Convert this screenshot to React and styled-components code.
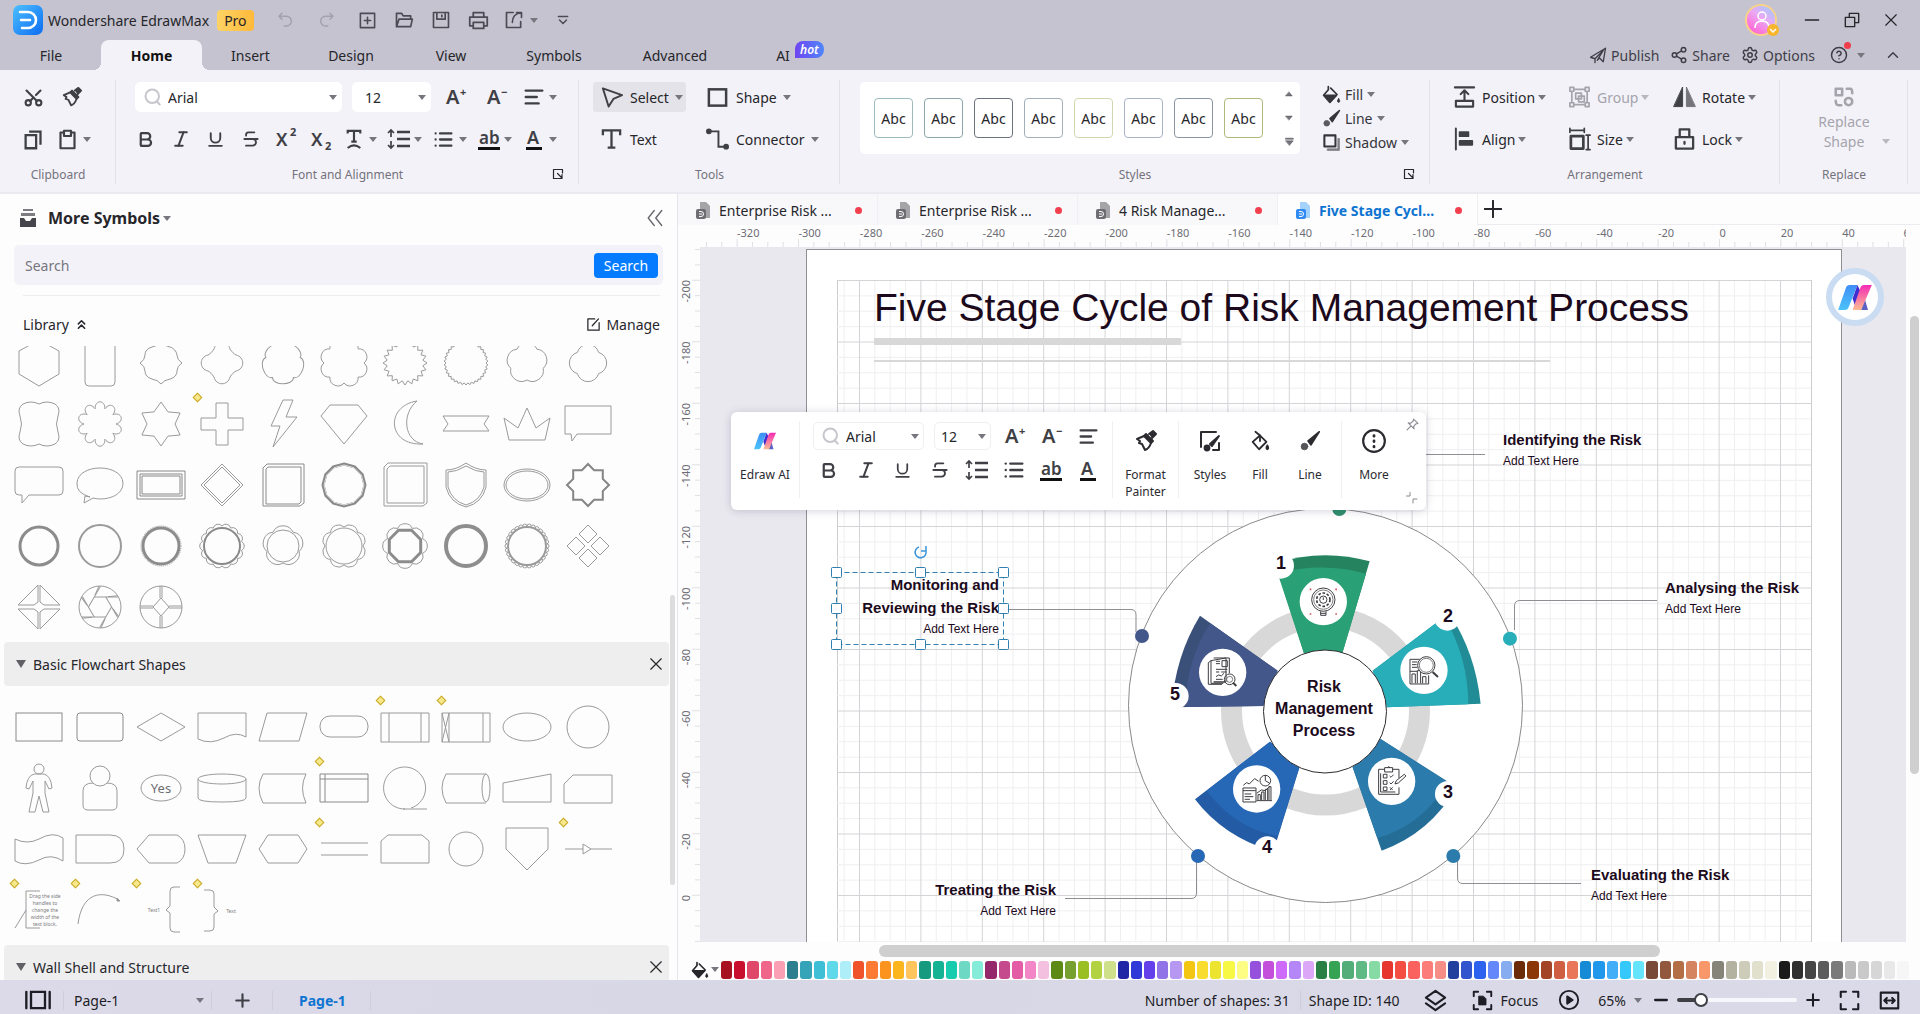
import React, { useState } from "react";
import styled, { createGlobalStyle, css } from "styled-components";
import {
  AlignLeft,
  Bold,
  ChevronsUp,
  ChevronUp,
  CircleHelp,
  Italic,
  List,
  Scissors,
  Settings,
  Share2,
  Strikethrough,
  Underline,
} from "lucide-react";

// STYLES
const GlobalStyle = createGlobalStyle`
  * {
    box-sizing: border-box;
  }
  body {
    margin: 0;
    overflow: hidden;
    font-family: "Noto Sans", "Open Sans", sans-serif;
    font-size: 14px;
    color: #26262b;
  }
  button, input, select {
    font: inherit;
    color: inherit;
  }
  button {
    border: 0;
    padding: 0;
    background: none;
    cursor: pointer;
  }
  svg {
    display: block;
    flex: none;
  }
`;

const Window = styled.div`
  display: flex;
  flex-direction: column;
  height: 100vh;
  background: #fdfdfe;
`;

const TitleBar = styled.header`
  display: flex;
  align-items: center;
  flex: none;
  height: 40px;
  padding: 0 20px 0 13px;
  background: #c5c3cf;
  .app-name {
    margin: 0 8px 0 5px;
  }
`;

const ProBadge = styled.span`
  padding: 0 7px;
  border-radius: 4px;
  line-height: 21px;
  background: linear-gradient(90deg, #ffd365, #ffb93a);
`;

const QuickBar = styled.div`
  display: flex;
  align-items: center;
  flex: 1;
  margin-left: 11px;
`;

const QuickButton = styled.button`
  display: flex;
  align-items: center;
  justify-content: center;
  gap: 6px;
  width: ${({ $w }) => $w || 37}px;
  height: 30px;
  color: ${({ $off }) => ($off ? "#a3a1ac" : "#4c4b55")};
`;

const WindowButtons = styled.div`
  display: flex;
  align-items: center;
  gap: 24px;
  button {
    width: 16px;
  }
`;

const TabBar = styled.nav`
  display: flex;
  flex: none;
  height: 30px;
  padding-left: 1px;
  background: #c5c3cf;
`;

const MenuTab = styled.button`
  position: relative;
  width: ${({ $w }) => $w}px;
  height: 30px;
  ${({ $active }) =>
    $active &&
    css`
      font-weight: 700;
      color: #111;
      border-radius: 8px 8px 0 0;
      background: #f3f2f8;
      &::before,
      &::after {
        content: "";
        position: absolute;
        bottom: 0;
        left: -8px;
        width: 8px;
        height: 8px;
        background: radial-gradient(circle at 0 0, #c5c3cf 8px, #f3f2f8 8px);
      }
      &::after {
        left: auto;
        right: -8px;
        background: radial-gradient(circle at 100% 0, #c5c3cf 8px, #f3f2f8 8px);
      }
    `}
`;

const HotBadge = styled.span`
  position: absolute;
  left: 54px;
  top: 1px;
  padding: 0 5px;
  border-radius: 8px 8px 8px 0;
  font-size: 12px;
  font-style: italic;
  font-weight: 600;
  line-height: 17px;
  color: #fff;
  background: linear-gradient(90deg, #6f45f2, #4f86fb);
`;

const TabActions = styled.div`
  display: flex;
  align-items: center;
  gap: 11px;
  margin-left: auto;
  padding-right: 18px;
  color: #3f3e48;
  button {
    position: relative;
    display: flex;
    align-items: center;
    gap: 4px;
  }
  .help {
    gap: 9px;
    margin: 0 8px 0 4px;
  }
`;

const HelpDot = styled.i`
  position: absolute;
  right: 14px;
  top: -4px;
  width: 7px;
  height: 7px;
  border-radius: 50%;
  background: #f03e4d;
`;

const Caret = styled.i`
  flex: none;
  width: 0;
  height: 0;
  border: 4px solid transparent;
  border-width: 5px 4px 0;
  border-top-color: ${({ $color }) => $color || "#77767f"};
`;

const Ribbon = styled.section`
  display: flex;
  flex: none;
  height: 124px;
  padding-right: 12px;
  border-bottom: 2px solid #ebeaf0;
  background: #f3f2f8;
`;

const Group = styled.div`
  position: relative;
  display: flex;
  flex-direction: column;
  flex: ${({ $grow }) => ($grow ? 1 : "none")};
  gap: 12px;
  width: ${({ $w }) => $w}px;
  padding: 12px 0 0 ${({ $pad }) => $pad || 14}px;
  &::after {
    content: "";
    position: absolute;
    right: 0;
    top: 10px;
    height: 104px;
    border-right: 1px solid #e2e1e8;
  }
`;

const GroupLabel = styled.div`
  position: absolute;
  left: 0;
  right: 0;
  bottom: 8px;
  font-size: 12px;
  line-height: 18px;
  text-align: center;
  color: #74737d;
`;

const Launcher = styled.button`
  position: absolute;
  right: 15px;
  bottom: 12px;
`;

const Row = styled.div`
  display: flex;
  align-items: center;
  height: 30px;
  padding-left: ${({ $pad }) => $pad || 0}px;
`;

const IconButton = styled.button`
  display: flex;
  align-items: center;
  flex: none;
  width: ${({ $w }) => $w || 35}px;
  height: 30px;
  color: #3f3f46;
  span {
    display: flex;
    justify-content: center;
    width: ${({ $drop }) => ($drop ? "31px" : "100%")};
  }
`;

const SelectBox = styled.label`
  display: flex;
  align-items: center;
  flex: none;
  gap: 6px;
  width: ${({ $w }) => $w}px;
  height: ${({ $h }) => $h || 30}px;
  padding: 0 4px 0 ${({ $pad }) => $pad || 8}px;
  border: 1px solid ${({ $line }) => ($line ? "#efeff2" : "#fff")};
  border-radius: 5px;
  background: #fff;
  select {
    flex: 1;
    min-width: 0;
    border: 0;
    padding: 0;
    outline: 0;
    appearance: none;
    background: none;
  }
`;

const ToolGrid = styled.div`
  display: grid;
  grid-template-columns: ${({ $cols }) => $cols};
  grid-auto-rows: 30px;
  row-gap: 12px;
`;

const ToolButton = styled.button`
  display: flex;
  align-items: center;
  justify-self: start;
  gap: ${({ $tight }) => ($tight ? 3 : 6)}px;
  height: 30px;
  padding: 0 3px 0 7px;
  border-radius: 3px;
  color: ${({ $off }) => ($off ? "#a5a4ad" : "#26262b")};
  background: ${({ $active }) => ($active ? "#e4e3e9" : "none")};
  .ico {
    width: 23px;
    margin-right: ${({ $tight }) => ($tight ? 3 : 1)}px;
    color: ${({ $off }) => ($off ? "#a5a4ad" : "#3f3f46")};
  }
`;

const StylesBody = styled.div`
  display: flex;
  gap: 22px;
  padding-right: 22px;
`;

const Gallery = styled.div`
  display: flex;
  align-items: center;
  flex: 1;
  gap: 11px;
  height: 72px;
  padding: 0 6px 0 14px;
  border-radius: 5px;
  background: #fff;
`;

const StyleCard = styled.button`
  width: 39px;
  height: 40px;
  border: 1px solid ${({ $line }) => $line};
  border-radius: 4px;
  background: #fff;
`;

const GalleryArrows = styled.div`
  display: flex;
  flex-direction: column;
  justify-content: space-between;
  height: 56px;
  margin-left: auto;
`;

const SideList = styled.div`
  display: flex;
  flex-direction: column;
  width: 86px;
  button {
    display: flex;
    align-items: center;
    gap: 4px;
    height: 24px;
    color: #35353b;
  }
`;

const ReplaceButton = styled.button`
  display: flex;
  flex-direction: column;
  align-items: center;
  gap: 4px;
  position: relative;
  padding: 4px 14px 0 0;
  line-height: 20px;
  color: #a5a4ad;
  i {
    position: absolute;
    right: 18px;
    bottom: 8px;
  }
`;

const Main = styled.main`
  display: flex;
  flex: 1;
  min-height: 0;
`;

const Sidebar = styled.aside`
  display: flex;
  flex-direction: column;
  flex: none;
  width: 678px;
  border-right: 1px solid #e6e5ec;
  background: #fdfdfe;
`;

const SidebarHead = styled.div`
  display: flex;
  align-items: center;
  flex: none;
  height: 48px;
  padding: 0 13px 0 19px;
  h2 {
    margin: 0 3px 0 11px;
    font-size: 16px;
    font-weight: 700;
  }
  button {
    margin-left: auto;
    color: #66666c;
  }
`;

const SearchBox = styled.form`
  display: flex;
  align-items: center;
  flex: none;
  height: 40px;
  margin: 3px 14px 10px;
  padding: 0 5px 0 11px;
  border-radius: 5px;
  background: #f3f2f8;
  input {
    flex: 1;
    border: 0;
    padding: 0;
    outline: 0;
    background: none;
  }
  input::placeholder {
    color: #77767f;
    opacity: 1;
  }
  button {
    width: 64px;
    height: 25px;
    border-radius: 4px;
    color: #fff;
    background: #057bff;
  }
`;

const LibraryBar = styled.div`
  display: flex;
  justify-content: space-between;
  flex: none;
  height: 51px;
  margin: 0 17px 0 23px;
  padding-top: 6px;
  border-top: 1px solid #ededf2;
  button {
    display: flex;
    align-items: center;
    gap: 5px;
  }
`;

const ShapeScroll = styled.div`
  position: relative;
  flex: 1;
  min-height: 0;
  overflow: hidden;
`;

const ScrollThumb = styled.div`
  position: absolute;
  right: 2px;
  top: 249px;
  width: 5px;
  height: 290px;
  border-radius: 3px;
  background: #dddde0;
`;

const ShapeGrid = styled.div`
  display: grid;
  grid-template-columns: repeat(10, 61px);
  grid-auto-rows: 61px;
  margin: ${({ $scrolled }) => ($scrolled ? "-14px 0 5px 8px" : "10px 0 5px 8px")};
`;

const ShapeCell = styled.button`
  position: relative;
  display: flex;
  align-items: center;
  justify-content: center;
  ${({ $marked }) =>
    $marked &&
    css`
      &::before {
        content: "";
        position: absolute;
        left: 3px;
        top: 1px;
        width: 5px;
        height: 5px;
        border: 1px solid #c9a62c;
        background: #f6e98a;
        transform: rotate(45deg);
      }
    `}
`;

const Category = styled.div`
  display: flex;
  align-items: center;
  height: 44px;
  margin: 0 8px 0 4px;
  padding: 0 6px 0 12px;
  border-radius: 4px;
  background: #eeeeef;
  span {
    flex: 1;
    margin-left: 7px;
  }
  i {
    border-width: 8px 5px 0;
    border-top-color: #606066;
  }
`;

const Workspace = styled.section`
  display: flex;
  flex-direction: column;
  flex: 1;
  min-width: 0;
`;

const DocTabs = styled.div`
  display: flex;
  align-items: center;
  flex: none;
  height: 31px;
  border-bottom: 1px solid #ececf0;
`;

const DocTab = styled.button`
  display: flex;
  align-items: center;
  gap: 8px;
  width: 200px;
  height: 31px;
  padding: 2px 15px 0 18px;
  border-right: 1px solid #f0f0f4;
  background: ${({ $active }) => ($active ? "#fdfdfe" : "#f8f8fb")};
  ${({ $active }) => $active && "color: #0d74d1; font-weight: 700;"}
  span {
    flex: 1;
    overflow: hidden;
    text-align: left;
    white-space: nowrap;
  }
  i {
    width: 7px;
    height: 7px;
    border-radius: 50%;
    background: #f2404f;
  }
`;

const NewTab = styled.button`
  margin-left: 6px;
`;

const Board = styled.div`
  display: grid;
  grid-template-columns: 22px 1fr 14px;
  grid-template-rows: 22px 1fr;
  flex: 1;
  min-height: 0;
`;

const RulerBox = styled.div`
  overflow: hidden;
  min-width: 0;
  min-height: 0;
  text {
    font-size: 11px;
    fill: #6d6d75;
  }
`;

const Canvas = styled.div`
  position: relative;
  overflow: hidden;
  min-width: 0;
  min-height: 0;
  background: #e9e8ef;
  font-family: "Liberation Sans", Arial, sans-serif;
  color: #1c0a1c;
`;

const VScroll = styled.div`
  padding: 69px 1px 0 4px;
  &::before {
    content: "";
    display: block;
    height: 458px;
    border-radius: 5px;
    background: #cfcfcf;
  }
`;

const HScroll = styled.div`
  flex: none;
  height: 17px;
  padding: 3px 260px 0 201px;
  &::before {
    content: "";
    display: block;
    height: 12px;
    border-radius: 6px;
    background: #cfcfcf;
  }
`;

const PageTitle = styled.h1`
  position: absolute;
  left: 174px;
  top: 38px;
  margin: 0;
  font-size: 39px;
  font-weight: 400;
  line-height: 46px;
  white-space: nowrap;
`;

const Note = styled.div`
  position: absolute;
  left: ${({ $x }) => $x}px;
  top: ${({ $y }) => $y}px;
  width: 167px;
  text-align: ${({ $right }) => ($right ? "right" : "left")};
  font-size: 12px;
  line-height: 20px;
  b {
    display: block;
    font-size: 15px;
    line-height: 23px;
    white-space: nowrap;
  }
`;

const HubText = styled.div`
  position: absolute;
  left: 564px;
  top: 429px;
  width: 120px;
  font-size: 16px;
  font-weight: 700;
  line-height: 22px;
  text-align: center;
`;

const StageNumber = styled.b`
  position: absolute;
  left: ${({ $x }) => $x - 10}px;
  top: ${({ $y }) => $y - 10}px;
  width: 20px;
  font-size: 18px;
  line-height: 20px;
  text-align: center;
`;

const SelectionSvg = styled.svg`
  position: absolute;
  left: 0;
  top: 0;
`;

const FloatBar = styled.div`
  position: absolute;
  left: 31px;
  top: 165px;
  display: flex;
  align-items: stretch;
  width: 695px;
  height: 98px;
  padding: 9px 0 12px;
  border-radius: 6px;
  background: #fff;
  box-shadow: 0 1px 8px rgba(60, 60, 90, 0.22);
  font-family: "Noto Sans", "Open Sans", sans-serif;
  color: #26262b;
`;

const FloatButtons = styled.div`
  display: flex;
  justify-content: center;
  flex: none;
  gap: 6px;
  width: ${({ $w }) => $w}px;
  border-right: ${({ $last }) => ($last ? 0 : "1px solid #f0f0f3")};
  button {
    display: flex;
    flex-direction: column;
    align-items: center;
    gap: 12px;
    min-width: 44px;
    padding-top: 7px;
    font-size: 12px;
    line-height: 17px;
    color: #2b2b30;
  }
  svg {
    height: 26px;
  }
`;

const FloatFont = styled.div`
  display: flex;
  flex-direction: column;
  flex: none;
  gap: 4px;
  width: 313px;
  border-right: 1px solid #f0f0f3;
`;

const FloatCorner = styled.div`
  display: flex;
  flex-direction: column;
  justify-content: space-between;
  margin: -3px 0 -6px auto;
  padding-right: 7px;
`;

const AiBubble = styled.button`
  position: absolute;
  left: 1126px;
  top: 21px;
  display: flex;
  align-items: center;
  justify-content: center;
  width: 58px;
  height: 58px;
  border: 6px solid #c9dcf1;
  border-radius: 50%;
  background: #fff;
`;

const ColorBar = styled.div`
  display: flex;
  align-items: center;
  flex: none;
  gap: 2px;
  height: 21px;
  padding: 0 11px 0 13px;
  .fill {
    display: flex;
    align-items: center;
    gap: 2px;
    width: 28px;
  }
`;

const Swatch = styled.button`
  flex: 1;
  height: 18px;
  border-radius: 3px;
  background: ${({ $c }) => $c};
`;

const StatusBar = styled.footer`
  display: flex;
  align-items: center;
  flex: none;
  height: 34px;
  padding: 6px 20px 0 24px;
  background: linear-gradient(90deg, #dcdae8, #d8d7e6 40%, #dbdae8);
  color: #1d1d26;
`;

const PageSelect = styled.label`
  display: flex;
  align-items: center;
  width: 149px;
  margin-left: 11px;
  padding: 0 7px 0 10px;
  border-left: 1px solid #cfcddb;
  border-right: 1px solid #cfcddb;
  select {
    flex: 1;
    border: 0;
    padding: 0;
    appearance: none;
    background: none;
  }
`;

const PageTab = styled.button`
  padding: 0 24px 0 26px;
  border-left: 1px solid #cfcddb;
  border-right: 1px solid #cfcddb;
  font-weight: 700;
  color: #0d74d1;
`;

const StatusRight = styled.div`
  display: flex;
  align-items: center;
  margin-left: auto;
  .count {
    padding-right: 10px;
    border-right: 1px solid #cfcddb;
  }
  .shape-id {
    padding: 0 24px 0 8px;
  }
`;

const StatusButton = styled.button`
  display: flex;
  align-items: center;
  gap: 8px;
  margin-right: ${({ $after }) => $after || 0}px;
`;

const Zoom = styled.input`
  appearance: none;
  width: 120px;
  height: 4px;
  margin: 0 9px;
  border-radius: 2px;
  background: linear-gradient(90deg, #3f3f46 18%, #f6f6fb 18%);
  &::-webkit-slider-thumb {
    appearance: none;
    width: 14px;
    height: 14px;
    border: 2px solid #3f3f46;
    border-radius: 50%;
    background: #fff;
  }
`;

// ICONS
const Svg = ({ s = 20, w = 2, fill = "none", children, ...rest }) => (
  <svg
    width={s}
    height={s}
    viewBox="0 0 24 24"
    fill={fill}
    stroke="currentColor"
    strokeWidth={w}
    strokeLinecap="round"
    strokeLinejoin="round"
    {...rest}
  >
    {children}
  </svg>
);

const Letters = ({ text, size = 20, mark, markY = 12, bar, w = 24 }) => (
  <svg width={w} height="30" viewBox={`0 0 ${w} 30`} fill="#3f3f46">
    <text x={bar ? 1 : 2} y={bar ? 20 : 22} fontSize={size} fontWeight="600">
      {text}
    </text>
    {mark && (
      <text x={w - 8} y={markY} fontSize="11" fontWeight="700">
        {mark}
      </text>
    )}
    {bar && <path d={`M0 24.5H${w}`} stroke="#111" strokeWidth="3" />}
  </svg>
);

const FontUp = () => <Letters text="A" mark="+" markY={14} />;
const FontDown = () => <Letters text="A" mark="−" markY={14} />;
const Highlight = () => <Letters text="ab" size={17} bar w={22} />;
const FontColor = () => <Letters text="A" size={18} bar w={16} />;

const BrushIcon = ({ s = 22 }) => (
  <Svg s={s} className="ico">
    <path d="M15 5 19 2l3 3-4 4" fill="currentColor" />
    <path d="M12 5l7 7-2 2-7-7z" fill="currentColor" />
    <path d="M10 7 3 10l3 2-1 2 3 1 3 6c4-1 5-4 6-7" />
  </Svg>
);

const CopyIcon = () => (
  <Svg s={21} w={2.6} strokeLinecap="butt">
    <path d="M3 7h12v15H3zM7 3h13v15" strokeLinejoin="miter" />
  </Svg>
);

const PasteIcon = () => (
  <Svg s={21} w={2.5}>
    <path d="M8 4H4v18h16V4h-4M8 2h8v6H8z" />
  </Svg>
);

const SpacingIcon = () => (
  <svg width="24" height="22" viewBox="0 0 24 22" fill="none" stroke="currentColor">
    <path d="M10 4h13M10 11h13M10 18h13" strokeWidth="2.6" />
    <path d="M4 2v7M1 5l3-3 3 3M4 13v7M1 17l3 3 3-3" strokeWidth="1.7" />
  </svg>
);

const TextCurveIcon = () => (
  <svg width="18" height="22" viewBox="0 0 20 24" fill="none" stroke="currentColor" strokeWidth="2.4">
    <path d="M3 6V3h14v3M10 3v12M7 15h6" />
    <path d="M3 22q7-6 14 0" />
  </svg>
);

const CursorIcon = () => (
  <Svg s={26} className="ico">
    <path d="M3 3 23 10l-9 4-5 8z" />
  </Svg>
);

const SquareIcon = () => (
  <Svg s={24} w={2.6} className="ico">
    <rect x="3" y="4" width="18" height="17" strokeLinejoin="miter" />
  </Svg>
);

const SerifTIcon = () => (
  <Svg s={24} w={2.4} className="ico" strokeLinecap="butt">
    <path d="M3 8V3h18v5M12 3v18M8 21h8" strokeLinejoin="miter" />
  </Svg>
);

const ConnectorIcon = () => (
  <Svg s={26} w={2} className="ico">
    <path d="M5 4h8v16h7" strokeLinejoin="miter" />
    <circle cx="3" cy="4" r="2" fill="currentColor" />
    <circle cx="21" cy="20" r="2" fill="currentColor" />
  </Svg>
);

const BucketIcon = ({ s = 19 }) => (
  <Svg s={s} w={2.2}>
    <path d="M8 2v4l-6 7 8 9 9-10-8-8" />
    <path d="M3 13h15l-8 8z" fill="currentColor" />
    <path d="M21 17q-3 4 0 5 3-1 0-5" fill="currentColor" strokeWidth="1" />
  </Svg>
);

const BucketOutline = () => (
  <Svg s={22} w={2}>
    <path d="M7 2l5 4-8 7 7 8 8-8-8-8" />
    <path d="M12 6v6M20 17q-2 3 0 4 2-1 0-4" fill="currentColor" />
  </Svg>
);

const PenIcon = ({ s = 19 }) => (
  <Svg s={s} w={1}>
    <path d="M22 2 10 12l3 4z" fill="currentColor" strokeWidth="2" />
    <circle cx="6" cy="18" r="3.6" fill="currentColor" opacity=".8" />
  </Svg>
);

const ShadowIcon = () => (
  <Svg s={19} w={2.6}>
    <path d="M7 22h15V7h-2v13H7z" fill="currentColor" opacity=".6" strokeWidth="1" />
    <rect x="3" y="3" width="14" height="14" />
  </Svg>
);

const PositionIcon = () => (
  <Svg s={24} w={2.2} className="ico">
    <path d="M2 2h20M12 16V6M8 9l4-4 4 4M3 16h18v6H3z" />
  </Svg>
);

const AlignIcon = () => (
  <Svg s={26} w={2} className="ico">
    <path d="M3 1v22" />
    <path d="M7 5h9v4H7zM7 14h13v4H7z" fill="currentColor" />
  </Svg>
);

const GroupIcon = () => (
  <Svg s={24} w={1.8} className="ico">
    <rect x="4" y="4" width="16" height="16" />
    <path d="M2 2h4v4H2zM18 2h4v4h-4zM2 18h4v4H2zM18 18h4v4h-4z" fill="#f3f2f8" />
    <path d="M8 8h6v6H8zM11 11h6v6h-6z" />
  </Svg>
);

const SizeIcon = () => (
  <Svg s={24} w={2} className="ico">
    <rect x="3" y="9" width="13" height="13" strokeWidth="2.8" />
    <path d="M2 3h15M2 1v4M17 1v4M21 8v15M19 8h4M19 23h4" strokeWidth="1.8" />
  </Svg>
);

const RotateIcon = () => (
  <Svg s={24} w={1} className="ico">
    <path d="M10 2v20H1z" fill="currentColor" />
    <path d="M14 2v20h9z" fill="currentColor" opacity=".7" />
  </Svg>
);

const LockIcon = () => (
  <Svg s={24} w={2.4} className="ico">
    <path d="M3 10h18v12H3zM7 10V2h10v8M12 15v2" />
  </Svg>
);

const ReplaceIcon = () => (
  <Svg s={22} w={2.8}>
    <path d="M3 3h7v7H3zM15 3h4q2 0 2 5M9 21H6q-3 0-3-5" />
    <circle cx="17" cy="17" r="4" />
  </Svg>
);

const LauncherIcon = () => (
  <Svg s={12} w={2.4}>
    <path d="M21 10V3H3v18h7M11 11l9 9M20 13v8h-8" />
  </Svg>
);

const AiLogo = ({ w = 34 }) => (
  <svg width={w} height={Math.round(w * 0.74)} viewBox="0 0 35 26">
    <defs>
      <linearGradient id="aiBlue" x1="0" y1="0" x2="0" y2="1">
        <stop offset="0" stopColor="#3e8ef7" />
        <stop offset="1" stopColor="#4cc3fa" />
      </linearGradient>
      <linearGradient id="aiPink" x1="0" y1="0" x2="0" y2="1">
        <stop offset="0" stopColor="#f52bb4" />
        <stop offset="1" stopColor="#fbbd93" />
      </linearGradient>
    </defs>
    <path d="M22 12h5l4 14h-8z" fill="#5b62c4" />
    <path d="M0 26 8 3q1-3 4-3h8l-9 23q-1 3-4 3z" fill="url(#aiBlue)" />
    <path d="M20 0l4 8-6 15-3-9z" fill="#3f2fd0" />
    <path d="M35 0h-8q-3 0-4 3l-8 23h9z" fill="url(#aiPink)" />
  </svg>
);

const AppLogo = () => (
  <svg width="30" height="30" viewBox="0 0 30 30">
    <defs>
      <linearGradient id="appBlue" x1="0" y1="0" x2="1" y2="1">
        <stop offset="0" stopColor="#4dc0ff" />
        <stop offset="1" stopColor="#0c6cf2" />
      </linearGradient>
    </defs>
    <rect width="30" height="30" rx="7" fill="url(#appBlue)" />
    <path d="M7 7h8a8 8 0 0 1 0 16H9M8 15h9" fill="none" stroke="#fff" strokeWidth="2.6" strokeLinecap="round" />
  </svg>
);

const DocIcon = ({ active }) => (
  <svg width="15" height="17" viewBox="0 0 15 17">
    <path d="M4 0h6l4 4v12H4z" fill={active ? "#a4d2fb" : "#a5a5a8"} />
    <rect y="7" width="10" height="10" rx="2" fill={active ? "#2f8af2" : "#6e6e72"} />
    <path d="M3 9.5h2a2.5 2.5 0 0 1 0 5H3M3 12h3" fill="none" stroke="#fff" />
  </svg>
);

const Avatar = () => (
  <svg width="36" height="36" viewBox="0 0 36 36">
    <defs>
      <linearGradient id="avatar" x1="1" y1="0" x2="0.3" y2="1">
        <stop offset="0" stopColor="#8fd3ff" />
        <stop offset="0.5" stopColor="#eaa9f5" />
        <stop offset="1" stopColor="#ff62d2" />
      </linearGradient>
    </defs>
    <circle cx="17" cy="18" r="15" fill="url(#avatar)" stroke="#f8d28a" strokeWidth="2" />
    <circle cx="18" cy="14" r="4" fill="none" stroke="#fff" strokeWidth="1.5" />
    <path d="M11 26q0-7 7-7t7 7" fill="none" stroke="#fff" strokeWidth="1.5" />
    <circle cx="29" cy="28" r="6" fill="#f8b62d" />
    <path d="m26 27 3 3 3-3" fill="none" stroke="#fff" strokeWidth="1.5" />
  </svg>
);

const Close = () => (
  <Svg s={14} w={2}>
    <path d="M3 3l18 18M21 3 3 21" />
  </Svg>
);

const FindIcon = () => (
  <Svg s={18} w={2.6} color="#c6c6cc">
    <circle cx="11" cy="11" r="9" />
    <path d="m17 18 4 4" />
  </Svg>
);

// SHAPE HELPERS
const polar = (r, a) => [24 + r * Math.sin(a), 24 - r * Math.cos(a)].map((v) => v.toFixed(1)).join(" ");

// closed outline that swings between two radii
const star = (n, outer, inner, turn = 0) => {
  const pts = [];
  for (let i = 0; i < n * 2; i++) pts.push(polar(i % 2 ? inner : outer, (Math.PI * i) / n + turn));
  return `M${pts.join("L")}Z`;
};

// closed outline made of n round lobes
const lobes = (n, r, bulge, turn = 0) => {
  let d = `M${polar(r, turn)}`;
  for (let i = 1; i <= n; i++) d += `A${bulge} ${bulge} 0 0 1 ${polar(r, (2 * Math.PI * i) / n + turn)}`;
  return `${d}Z`;
};

// like lobes, but with longer, softer leaves
const petals = (n, valley, reach) => {
  const step = (2 * Math.PI) / n;
  let d = `M${polar(valley, -step / 2)}`;
  for (let i = 0; i < n; i++) {
    const a = i * step;
    d += `C${polar(reach, a - step / 3)} ${polar(reach, a + step / 3)} ${polar(valley, a + step / 2)}`;
  }
  return `${d}Z`;
};

const polygon = (n, r, turn = 0) => {
  const pts = [];
  for (let i = 0; i < n; i++) pts.push(polar(r, (2 * Math.PI * i) / n + turn));
  return `M${pts.join("L")}Z`;
};

const basicShapes = [
  <path d="M24 1 44 12V35L24 47 4 35V12Z" />,
  <path d="M9 0V43q0 4 4 4H35q4 0 4-4V0" />,
  <path d="M24 3q3 4 9 5 6 2 7 8 0 5 5 8-5 3-5 8 0 6-7 8-6 1-9 5-3-4-9-5-7-2-7-8 0-5-5-8 5-3 5-8 0-6 7-8 6-1 9-5Z" />,
  <path d="M16 10C18 1 30 1 32 10 34 13 36 15 38 16 47 18 47 30 38 32 36 33 34 35 32 38 30 47 18 47 16 38 14 35 12 33 10 32 1 30 1 18 10 16 12 15 14 13 16 10Z" />,
  <path d={petals(5, 18, 25)} transform="rotate(36 24 24)" />,
  <path d={lobes(8, 20, 8)} />,
  <path d={star(20, 22, 18)} />,
  <path d={star(34, 22, 20)} />,
  <path d={lobes(5, 17, 11, Math.PI / 5)} />,
  <path d={lobes(4, 15, 11, Math.PI / 4)} />,
  <path d="M8 4q8-4 16 0 8-4 16 0 6 4 3 12-3 8 0 16 3 8-3 12-8 4-16 0-8 4-16 0-6-4-3-12 3-8 0-16-3-8 3-12Z" />,
  <path d={petals(10, 16, 25)} />,
  <path d={star(6, 22, 14)} />,
  <path d="M18 3H30V18H45V30H30V45H18V30H3V18H18Z" />,
  <path d="M24 0H34L27 17H38L14 47 21 26H12Z" />,
  <path d="M10 5H38L47 16 24 44 1 16Z" />,
  <path d="M36 1C4 6 6 46 42 44 23 41 20 14 36 1Z" />,
  <path d="M1 16H47L42 24 47 31H1L6 24Z" />,
  <path d="M6 40 1 18 15 28 24 8 33 28 47 18 42 40Z" />,
  <path d="M1 6H47V34H13L8 41 7 34H1Z" />,
  <path d="M4 6H44q4 0 4 4V30q0 4-4 4H14L7 42V34H4q-4 0-4-4V10q0-4 4-4Z" />,
  <path d="M14 36Q0 32 1 22C2 2 46 2 47 22 47 36 28 40 17 37L8 42 9 35Z" />,
  <path d="M0 10H48V38H0ZM3 13H45V35H3ZM5 15H43V33H5Z" stroke="#888" />,
  <path d="M24 3 45 24 24 45 3 24ZM24 6 42 24 24 42 6 24Z" />,
  <path d="M8 3H45V42L41 45H4V7ZM9 6H42V41L40 43H7V8Z" stroke="#8a8a8a" />,
  <><path d={polygon(12, 21)} stroke="#8a8a8a" strokeWidth="3" /><path d={polygon(12, 20)} stroke="#ddd" /></>,
  <path d="M7 2H46V42L42 45H3V6ZM9 5H43V42H6V8Z" />,
  <path d="M24 2Q34 9 44 9V26Q40 42 24 46 8 42 4 26V9Q14 9 24 2ZM24 5Q34 11 42 11V26Q38 40 24 44 10 40 6 26V11Q14 11 24 5Z" />,
  <><ellipse cx="24" cy="24" rx="23" ry="16" /><ellipse cx="24" cy="24" rx="21" ry="14" /></>,
  <path d={star(8, 21, 16)} stroke="#858585" strokeWidth="2" strokeLinejoin="miter" />,
  <circle cx="24" cy="24" r="19" stroke="#8c8c8c" strokeWidth="3" />,
  <circle cx="24" cy="24" r="21" strokeWidth="2" />,
  <><circle cx="24" cy="24" r="18" stroke="#8c8c8c" strokeWidth="3" /><circle cx="24" cy="24" r="20" strokeDasharray="1 1" /></>,
  <><circle cx="24" cy="24" r="18" stroke="#8a8a8a" strokeWidth="2" /><path d={lobes(14, 20, 5)} /></>,
  <><circle cx="24" cy="24" r="16" /><path d={lobes(5, 17, 11, Math.PI / 5)} /></>,
  <><circle cx="24" cy="24" r="18" /><path d={lobes(8, 19, 8)} /></>,
  <><path d={polygon(8, 17, Math.PI / 8)} stroke="#8c8c8c" strokeWidth="3" /><path d={lobes(8, 19, 8, Math.PI / 8)} /></>,
  <circle cx="24" cy="24" r="20" stroke="#8e8e8e" strokeWidth="4" />,
  <><circle cx="24" cy="24" r="19" strokeWidth="2" /><path d={lobes(30, 20, 2)} /></>,
  <path d="M24 3 33 12 24 21 15 12ZM24 27 33 36 24 45 15 36ZM12 15 21 24 12 33 3 24ZM36 15 45 24 36 33 27 24Z" />,
  <path d="M23 2V19L19 22H3ZM25 2V19L29 22H45ZM23 46V29L19 26H3ZM25 46V29L29 26H45Z" />,
  <>
    <circle cx="24" cy="24" r="21" />
    {[0, 60, 120, 180, 240, 300].map((a) => (
      <path key={a} d="M18 14 42 14M19 12 23 3" transform={`rotate(${a} 24 24)`} />
    ))}
  </>,
  <><circle cx="24" cy="24" r="21" /><path d="M24 15 32 24 24 33 16 24ZM23 3V15M25 3V15M23 33V45M25 33V45M3 23H16M3 25H16M32 23H45M32 25H45" /></>,
];

const tiny = { stroke: "none", fill: "#7c7c7c", fontSize: 5, textAnchor: "middle" };

const flowShapes = [
  <rect x="1" y="10" width="46" height="28" stroke="#8a8a8a" />,
  <rect x="1" y="10" width="46" height="28" rx="3" stroke="#8a8a8a" />,
  <path d="M24 10 48 24 24 38 0 24Z" />,
  <path d="M0 10H48V34Q38 28 26 35 12 42 0 36Z" />,
  <path d="M8 10H48L40 38H0Z" />,
  <rect x="0" y="13" width="48" height="21" rx="10" />,
  <path d="M0 10H48V39H0ZM8 10V39M40 10V39" />,
  <path d="M0 10H48V39H0ZM7 10V39M41 10V39M0 10 7 39M7 10 0 39" />,
  <ellipse cx="24" cy="24" rx="24" ry="14" />,
  <circle cx="24" cy="24" r="21" />,
  <path d="M19 10Q12 12 11 24L14 25 18 17V29L14 48H20L24 32 28 48H34L30 29V17L34 25 37 24Q36 12 29 10ZM24 0A5 5 0 1 1 24 10 5 5 0 1 1 24 0Z" />,
  <><circle cx="24" cy="12" r="10" /><path d="M17 19Q7 19 7 27V41Q7 46 12 46H36Q41 46 41 41V27Q41 19 31 19" /></>,
  <><ellipse cx="24" cy="24" rx="20" ry="13" /><text x="24" y="29" fontSize="13" textAnchor="middle" stroke="none" fill="#6e6e72">Yes</text></>,
  <><ellipse cx="24" cy="15" rx="24" ry="5" /><path d="M0 15V34Q0 38 24 38T48 34V15" /></>,
  <path d="M4 10H47Q40 24 47 39H4Q-4 24 4 10Z" />,
  <path d="M0 10H48V38H0ZM5 10V38M0 15H48" stroke="#8a8a8a" />,
  <path d="M24 45A21 21 0 1 1 30 44M22 45H46" />,
  <><path d="M44 10H4Q-4 24 4 39H44" /><ellipse cx="44" cy="24" rx="4" ry="14" /></>,
  <path d="M0 19 48 10V38H0Z" />,
  <path d="M9 11H48V39H0V20Z" />,
  <path d="M0 14Q12 20 24 14 38 6 48 13V36Q36 28 24 35 10 42 0 36Z" />,
  <path d="M0 10H34Q48 10 48 24T34 38H0Z" />,
  <path d="M12 10H40Q48 14 48 24T40 38H12L0 24Z" />,
  <path d="M0 10H48L38 38H10Z" />,
  <path d="M9 10H39L48 24 39 38H9L0 24Z" />,
  <path d="M1 18H48M1 30H48" />,
  <path d="M7 10H41L48 16V38H0V16Z" />,
  <circle cx="24" cy="24" r="17" />,
  <path d="M3 3H45V24L24 45 3 24Z" />,
  <path d="M1 24H19M27 24H48M19 19 27 24 19 29Z" />,
  <>
    <path d="M25 5H11V42H25M11 24 0 42" />
    {["Drag the side", "handles to", "change the", "width of the", "text block."].map((t, i) => (
      <text key={t} x="30" y={12 + i * 7} {...tiny}>{t}</text>
    ))}
  </>,
  <><path d="M2 38C6 6 26 4 43 14" /><path d="M41 12 44 15 41 15Z" fill="#8a8a8a" /></>,
  <><path d="M43 1H37Q33 1 33 5V20L29 24 33 27V42Q33 46 37 46H43" /><text x="17" y="26" {...tiny}>Text1</text></>,
  <><path d="M6 4H12Q16 4 16 8V21L20 25 16 28V41Q16 45 12 45H6" /><text x="33" y="27" {...tiny}>Text</text></>,
];

const markedFlow = [6, 7, 15, 25, 29, 30, 31, 32, 33];

const ShapeSet = ({ shapes, marked = [], scrolled, name }) => (
  <ShapeGrid $scrolled={scrolled}>
    {shapes.map((shape, i) => (
      <ShapeCell key={i} $marked={marked.includes(i)} aria-label={`${name} ${i + 1}`}>
        <svg width="48" height="48" viewBox="0 0 48 48" overflow="visible" fill="none" stroke="#9a9a9a">
          {shape}
        </svg>
      </ShapeCell>
    ))}
  </ShapeGrid>
);

// RULERS AND CANVAS
const STEP = 61.4;

const TopRuler = () => (
  <RulerBox>
    <svg width="1220" height="22">
      {Array.from({ length: 84 }, (_, i) => {
        const x = 98.5 - STEP * 2 + (i * STEP) / 4;
        return <path key={i} d={`M${x} ${i % 4 ? 17 : 14}V22`} stroke="#e0e0e5" />;
      })}
      {Array.from({ length: 20 }, (_, i) => (
        <text key={i} x={37 + i * STEP} y="12">
          {i * 20 - 320}
        </text>
      ))}
    </svg>
  </RulerBox>
);

const SideRuler = () => (
  <RulerBox>
    <svg width="22" height="700">
      {Array.from({ length: 48 }, (_, i) => {
        const y = 2.5 + (i * 61.5) / 4;
        return <path key={i} d={`M${i % 4 === 2 ? 14 : 17} ${y}H22`} stroke="#e0e0e5" />;
      })}
      {Array.from({ length: 11 }, (_, i) => (
        <text key={i} textAnchor="end" transform={`translate(12 ${33 + i * 61.5}) rotate(-90)`}>
          {i * 20 - 200}
        </text>
      ))}
    </svg>
  </RulerBox>
);

const GridLines = () => {
  const minor = [];
  const major = [];
  for (let i = -1; i < 62; i++) {
    const x = 859.5 + (i * STEP) / 4;
    (i % 4 ? minor : major).push(`M${x} 280V943`);
  }
  for (let i = 0; i < 44; i++) {
    const y = 280.5 + (i * 61.5) / 4;
    (i % 4 ? minor : major).push(`M837 ${y}H1811`);
  }
  return (
    <>
      <path d={minor.join("")} stroke="#efeff2" />
      <path d={major.join("")} stroke="#d4d4d8" />
    </>
  );
};

const wedges = [
  {
    dark: "#25845f", fill: "#2aa076", notch: [513, 197], badge: [640, 305],
    outer: "M495 190Q637 145 779 184L697 460H582Z",
    inner: "M503 220Q637 185 768 221L697 460H582Z",
  },
  {
    dark: "#228c96", fill: "#27aeb9", notch: [1012, 353], badge: [942, 511],
    outer: "M788 512 1018 340Q1097 460 1112 611L830 622Z",
    inner: "M788 512 1003 350Q1075 475 1075 613L830 622Z",
  },
  {
    dark: "#246d96", fill: "#2b7cac", notch: [1014, 882], badge: [845, 844],
    outer: "M812 717 1040 862Q960 1000 815 1052L728 802Z",
    inner: "M812 717 1015 848Q930 980 802 1014L728 802Z",
  },
  {
    dark: "#235ba5", fill: "#2668b5", notch: [472, 1048], badge: [440, 867],
    outer: "M255 898Q340 1010 490 1055L568 803 480 725Z",
    inner: "M290 872Q375 985 503 1008L568 803 480 725Z",
  },
  {
    dark: "#3b5078", fill: "#43578a", notch: [197, 588], badge: [338, 517],
    outer: "M270 347 503 512 460 618 185 622Q195 470 270 347Z",
    inner: "M300 370 503 512 460 618 228 621Q225 490 300 370Z",
  },
];

const dots = [
  [688, 27, "#2d8f6c"],
  [96, 408, "#43578a"],
  [1200, 416, "#27aeb9"],
  [1030, 1068, "#2b7cac"],
  [264, 1068, "#2668b5"],
];

const BadgeDrawings = () => (
  <g fill="none" stroke="#3c3c40" strokeWidth="3">
    <circle cx="640" cy="299" r="35" />
    <circle cx="640" cy="299" r="29" strokeWidth="2" />
    <circle cx="640" cy="299" r="20" strokeDasharray="8 5" strokeWidth="5" />
    <circle cx="640" cy="299" r="11" />
    <path d="M640 292v8M632 334v12h16v-12M632 340h16" />
    <path d="M599 268h5M676 268h5M599 342h5M676 342h5" stroke="#d0545c" strokeWidth="5" />

    <path d="M930 478H900V552H956V526M906 486h16M906 494h14M906 502h16M900 514h22M906 550V522h10v28M922 550V512h10v38M938 550V530h10v20" />
    <circle cx="949" cy="496" r="26" fill="#fff" />
    <circle cx="949" cy="496" r="21" strokeWidth="2" />
    <path d="m968 516 16 15" strokeWidth="6" />

    <path d="M824 808H806V883H867V862M848 808H867V834M824 803h24v13h-24zM832 803q4-6 8 0" />
    <path d="M820 823h11v11h-11zM820 842h11v11h-11zM820 861h11v11h-11zM839 828l4 4 8-8M839 848l4 4 8-8M840 862l8 8M848 862l-8 8M812 820v56h44" />
    <path d="m855 852 4-10 24-19 5 5-23 21z" />

    <path d="M399 864H438V906H399ZM399 872h38M404 882h20M404 890h26M404 898h16M400 856l10-8 8 4 16-16 12 8" />
    <circle cx="466" cy="842" r="16" />
    <path d="M466 842V826M466 842l13 8M444 900V884h7v16M455 900V876h7v24M466 900V868h7v32M477 900V860h6v40M440 902h46M440 880l14-10 12 2 14-14" />

    <path d="M311 474H358V520M348 546H311ZV474L303 482V550H340M303 482L295 488V553H336" />
    <path d="M318 484h12M318 491h12M336 482h16v18h-16zM318 508h34M318 516h10M334 516h16M318 530l8-5 8 3 8-8M318 538h20" />
    <circle cx="359" cy="538" r="16" />
    <circle cx="359" cy="538" r="9" strokeWidth="2" />
    <path d="m369 548 10 10" strokeWidth="6" />
  </g>
);

const Drawing = () => (
  <svg width="1206" height="696" viewBox="700 247 1206 696" aria-hidden="true">
    <rect x="806.5" y="249.5" width="1035" height="800" fill="#fff" stroke="#909094" />
    <rect x="837.5" y="280.5" width="974" height="800" fill="none" stroke="#cdcdd1" />
    <GridLines />
    <path d="M874 338h307v7H874zM874 360h676v2H874z" fill="#d8d8d8" />
    <g fill="none" stroke="#8f8f93">
      <path d="M1426 454.5H1485M1003 609.5H1131Q1136 609.5 1136 615V632M1514.5 630V606Q1514.5 600.5 1520 600.5H1657M1457.5 860V878Q1457.5 883.5 1463 883.5H1581M1196.5 860V893Q1196.5 898.5 1191 898.5H1065" />
    </g>
    <circle cx="1325.5" cy="705.5" r="197" fill="#fff" stroke="#8a8a8a" />
    <circle cx="1325.5" cy="711" r="94" fill="none" stroke="#d8d8d8" strokeWidth="21" />
    <g transform="translate(1110 500) scale(0.3333)">
      {wedges.map((w) => (
        <g key={w.fill}>
          <path d={w.outer} fill={w.dark} />
          <path d={w.inner} fill={w.fill} />
          <circle cx={w.notch[0]} cy={w.notch[1]} r="39" fill="#fff" />
          <circle cx={w.badge[0]} cy={w.badge[1]} r="71" fill="#fff" />
        </g>
      ))}
      <BadgeDrawings />
      {dots.map(([x, y, c]) => (
        <circle key={c} cx={x} cy={y} r="21" fill={c} />
      ))}
    </g>
    <circle cx="1325" cy="711.5" r="61.5" fill="#fff" stroke="#2c2c30" />
  </svg>
);

const Selection = () => (
  <SelectionSvg width="400" height="420" viewBox="700 247 400 420" fill="none" stroke="#2f7fb0">
    <rect x="836.5" y="572.5" width="167" height="72" strokeDasharray="5 3" />
    {[836.5, 920.5, 1003.5].map((x) =>
      [572.5, 608.5, 644.5].map(
        (y) =>
          !(x === 920.5 && y === 608.5) && (
            <rect key={`${x}-${y}`} x={x - 5} y={y - 5} width="10" height="10" rx="1" fill="#fff" />
          )
      )
    )}
    <path d="M919 547A5.5 5.5 0 1 0 926 551M926 546v5h-5" strokeWidth="1.5" stroke="#3b94d9" />
  </SelectionSvg>
);

const palette = `a8111f c8102e e0486a f0668a fb9fb4 2b7f8e 35a3b8 3fbfd6 5fd8ea aeeef8
f0522a fd7a35 fb931e fdb51f ffc45c 159a80 15b394 17ccae 6dd9c4 84ecd8
94286a c54a8d e55ca6 f286c6 f3c1df 5d8a14 76a030 9abf22 b3d242 cfe08a
2027a6 3038d8 6440ea 9173e8 b698f2 f3c614 f8dc30 ece42e f7f746 fdfd84
9550dc c44fdb ce6bfa b486f8 dba7f6 2a7f45 36a254 52ad78 5eb985 86dba4
e6352c f44e42 f9625e fc7c7a f78e86 213f9c 3153cd 2d62ee 6488fb 87adf0
6b2b08 8c3708 a44426 cf5f42 e97658 178ad6 1f97ea 41aef7 36c8fa 66e4fc
7a4a38 91583e b46e46 d48560 f8976a 868478 b3b1a0 ccccb8 e0e0cc f2f0e0
1a1a1a 303030 464646 5c5c5c 7a7a7a bababa c9c9c9 d6d6d6 e8e8e8 f6f6f6`.split(/\s+/);

const menuTabs = [
  ["File", 100], ["Home", 101], ["Insert", 97], ["Design", 104], ["View", 96],
  ["Symbols", 110], ["Advanced", 132], ["AI", 84],
];

const styleLines = ["#9dbabc", "#8ba5aa", "#6d737e", "#a2afb8", "#d0d8b0", "#a8b4c6", "#8995a2", "#b0b87c"];

const Drop = ({ label, children, w = 45 }) => (
  <IconButton $w={w} $drop aria-label={label}>
    <span>{children}</span>
    <Caret />
  </IconButton>
);

const Plain = ({ label, children, w }) => (
  <IconButton $w={w} aria-label={label}>
    <span>{children}</span>
  </IconButton>
);

const TopBar = () => (
  <TitleBar>
    <AppLogo />
    <span className="app-name">Wondershare EdrawMax</span>
    <ProBadge>Pro</ProBadge>
    <QuickBar>
      <QuickButton $off $w={40} aria-label="Undo">
        <Svg s={18}><path d="M8 3 4 7l4 4M4 7h10a6 6 0 0 1 0 13h-3" /></Svg>
      </QuickButton>
      <QuickButton $off $w={44} aria-label="Redo">
        <Svg s={18}><path d="M16 3l4 4-4 4M20 7H10a6 6 0 0 0 0 13h3" /></Svg>
      </QuickButton>
      <QuickButton aria-label="New">
        <Svg s={19}><path d="M3 3h18v18H3zM12 8v8M8 12h8" /></Svg>
      </QuickButton>
      <QuickButton aria-label="Open">
        <Svg s={20}><path d="M3 20V4h6l2 3h9v4M3 20l3-9h16l-2 9z" /></Svg>
      </QuickButton>
      <QuickButton aria-label="Save">
        <Svg s={20}><path d="M3 3h18v18H3zM7 3v8h10V3M13 6v2" /></Svg>
      </QuickButton>
      <QuickButton aria-label="Print">
        <Svg s={21}><path d="M6 8V3h12v5M6 18H2V8h20v10h-4M6 14h12v7H6z" /></Svg>
      </QuickButton>
      <QuickButton $w={48} aria-label="Export">
        <Svg s={20}><path d="M11 3H3v18h17v-7M15 3h6v6M21 3c-8 1-11 6-11 12" /></Svg>
        <Caret />
      </QuickButton>
      <QuickButton aria-label="Customize">
        <Svg s={14} w={2.5}><path d="M4 6h16M6 12l6 6 6-6" /></Svg>
      </QuickButton>
    </QuickBar>
    <WindowButtons>
      <Avatar />
      <button aria-label="Minimize"><Svg s={16} w={2}><path d="M2 12h20" /></Svg></button>
      <button aria-label="Restore"><Svg s={16} w={2}><path d="M2 8h14v14H2zM8 8V2h14v14h-6" /></Svg></button>
      <button aria-label="Close"><Close /></button>
    </WindowButtons>
  </TitleBar>
);

const Menu = () => {
  const [active, setActive] = useState("Home");
  return (
    <TabBar>
      {menuTabs.map(([name, w]) => (
        <MenuTab key={name} $w={w} $active={name === active} onClick={() => setActive(name)}>
          {name}
          {name === "AI" && <HotBadge>hot</HotBadge>}
        </MenuTab>
      ))}
      <TabActions>
        <button><Svg s={18} w={1.8}><path d="M22 3 2 15l6 2 11-11-8 13 3-3 5 5zM8 17v5" /></Svg>Publish</button>
        <button><Share2 size={18} />Share</button>
        <button><Settings size={18} />Options</button>
        <button className="help" aria-label="Help"><CircleHelp size={18} /><HelpDot /><Caret /></button>
        <button aria-label="Collapse ribbon"><ChevronUp size={18} /></button>
      </TabActions>
    </TabBar>
  );
};

const FontSelect = ({ w, h, line }) => (
  <SelectBox $w={w} $h={h} $line={line}>
    <FindIcon />
    <select aria-label="Font" defaultValue="Arial"><option>Arial</option></select>
    <Caret />
  </SelectBox>
);

const SizeSelect = ({ w, h, line, pad }) => (
  <SelectBox $w={w} $h={h} $line={line} $pad={pad}>
    <select aria-label="Font size" defaultValue="12"><option>12</option></select>
    <Caret />
  </SelectBox>
);

const CutIcon = styled(Scissors)`
  transform: rotate(-90deg);
`;

const RibbonBar = () => (
  <Ribbon>
    <Group $w={116} $pad={14}>
      <Row><Plain label="Cut" w={38}><CutIcon size={21} strokeWidth={2.4} /></Plain><Plain label="Format painter" w={40}><BrushIcon /></Plain></Row>
      <Row><Plain label="Copy" w={38}><CopyIcon /></Plain><Drop label="Paste"><PasteIcon /></Drop></Row>
      <GroupLabel>Clipboard</GroupLabel>
    </Group>

    <Group $w={463} $pad={12}>
      <Row $pad={7}>
        <FontSelect w={207} />
        <Row $pad={10}><SizeSelect w={79} pad={12} /></Row>
        <Row $pad={6}>
          <Plain label="Increase font size" w={38}><FontUp /></Plain>
          <Plain label="Decrease font size" w={43}><FontDown /></Plain>
          <Drop label="Alignment"><AlignLeft size={22} strokeWidth={2.6} /></Drop>
        </Row>
      </Row>
      <Row>
        <Plain label="Bold"><Bold size={19} strokeWidth={2.8} /></Plain>
        <Plain label="Italic"><Italic size={20} strokeWidth={2.4} /></Plain>
        <Plain label="Underline"><Underline size={19} strokeWidth={2.4} /></Plain>
        <Plain label="Strikethrough"><Strikethrough size={20} strokeWidth={2.2} /></Plain>
        <Plain label="Superscript"><Letters text="X" size={18} mark="2" /></Plain>
        <Plain label="Subscript"><Letters text="X" size={18} mark="2" markY={26} /></Plain>
        <Drop label="Text direction"><TextCurveIcon /></Drop>
        <Drop label="Line spacing"><SpacingIcon /></Drop>
        <Drop label="Bullets"><List size={21} strokeWidth={2.6} /></Drop>
        <Drop label="Highlight"><Highlight /></Drop>
        <Drop label="Font color"><FontColor /></Drop>
      </Row>
      <GroupLabel>Font and Alignment</GroupLabel>
      <Launcher aria-label="Font settings"><LauncherIcon /></Launcher>
    </Group>

    <Group $w={261} $pad={14}>
      <ToolGrid $cols="106px auto">
        <ToolButton $active><CursorIcon />Select<Caret /></ToolButton>
        <ToolButton><SquareIcon />Shape<Caret /></ToolButton>
        <ToolButton><SerifTIcon />Text</ToolButton>
        <ToolButton><ConnectorIcon />Connector<Caret /></ToolButton>
      </ToolGrid>
      <GroupLabel>Tools</GroupLabel>
    </Group>

    <Group $grow $pad={20}>
      <StylesBody>
        <Gallery>
          {styleLines.map((c) => <StyleCard key={c} $line={c}>Abc</StyleCard>)}
          <GalleryArrows>
            <Svg s={8} w={1} fill="#77767f"><path d="M12 6 22 18H2z" /></Svg>
            <Svg s={8} w={1} fill="#77767f"><path d="M12 18 22 6H2z" /></Svg>
            <Svg s={9} w={1} fill="#77767f"><path d="M12 22 22 10H2zM2 3h20v3H2z" /></Svg>
          </GalleryArrows>
        </Gallery>
        <SideList>
          <button><BucketIcon />Fill<Caret /></button>
          <button><PenIcon />Line<Caret /></button>
          <button><ShadowIcon />Shadow<Caret /></button>
        </SideList>
      </StylesBody>
      <GroupLabel>Styles</GroupLabel>
      <Launcher aria-label="Style settings"><LauncherIcon /></Launcher>
    </Group>

    <Group $w={350} $pad={16}>
      <ToolGrid $cols="115px 105px auto">
        <ToolButton $tight><PositionIcon />Position<Caret /></ToolButton>
        <ToolButton $tight $off><GroupIcon />Group<Caret $color="#b9b8c0" /></ToolButton>
        <ToolButton $tight><RotateIcon />Rotate<Caret /></ToolButton>
        <ToolButton $tight><AlignIcon />Align<Caret /></ToolButton>
        <ToolButton $tight><SizeIcon />Size<Caret /></ToolButton>
        <ToolButton $tight><LockIcon />Lock<Caret /></ToolButton>
      </ToolGrid>
      <GroupLabel>Arrangement</GroupLabel>
    </Group>

    <Group $w={128} $pad={14}>
      <ReplaceButton>
        <ReplaceIcon />
        <span>Replace<br />Shape</span>
        <Caret $color="#b9b8c0" />
      </ReplaceButton>
      <GroupLabel>Replace</GroupLabel>
    </Group>
  </Ribbon>
);

const SymbolPanel = () => (
  <Sidebar>
    <SidebarHead>
      <svg width="18" height="18" viewBox="0 0 18 18" fill="#45454b">
        <path d="M4 0h10v2H4zM2 4h14v3H2z" opacity=".7" />
        <path d="M1 9h4l2 3h4l2-3h4v9H1z" />
      </svg>
      <h2>More Symbols</h2>
      <Caret />
      <button aria-label="Collapse panel">
        <Svg s={18} w={1.8}><path d="M11 2 3 12l8 10M21 2l-8 10 8 10" /></Svg>
      </button>
    </SidebarHead>
    <SearchBox onSubmit={(e) => e.preventDefault()}>
      <input type="text" placeholder="Search" aria-label="Search symbols" />
      <button type="submit">Search</button>
    </SearchBox>
    <LibraryBar>
      <button>Library<ChevronsUp size={15} strokeWidth={2.5} /></button>
      <button>
        <Svg s={15} w={2}><path d="M14 3H3v18h18V9M10 14 20 3" /></Svg>
        Manage
      </button>
    </LibraryBar>
    <ShapeScroll>
      <ShapeSet name="Basic shape" shapes={basicShapes} marked={[13]} scrolled />
      <Category><Caret /><span>Basic Flowchart Shapes</span><button aria-label="Close Basic Flowchart Shapes"><Close /></button></Category>
      <ShapeSet name="Flowchart shape" shapes={flowShapes} marked={markedFlow} />
      <Category><Caret /><span>Wall Shell and Structure</span><button aria-label="Close Wall Shell and Structure"><Close /></button></Category>
      <ScrollThumb />
    </ShapeScroll>
  </Sidebar>
);

const FloatingToolbar = () => (
  <FloatBar>
    <FloatButtons $w={69}>
      <button><AiLogo w={22} />Edraw AI</button>
    </FloatButtons>
    <FloatFont>
      <Row $pad={13}>
        <FontSelect w={111} h={28} line />
        <Row $pad={10}><SizeSelect w={57} h={28} pad={6} line /></Row>
        <Row $pad={5}>
          <Plain label="Increase font size" w={37}><FontUp /></Plain>
          <Plain label="Decrease font size" w={37}><FontDown /></Plain>
          <Plain label="Alignment" w={37}><AlignLeft size={21} strokeWidth={2.6} /></Plain>
        </Row>
      </Row>
      <Row $pad={10}>
        <Plain label="Bold" w={37}><Bold size={19} strokeWidth={2.8} /></Plain>
        <Plain label="Italic" w={37}><Italic size={20} strokeWidth={2.4} /></Plain>
        <Plain label="Underline" w={37}><Underline size={19} strokeWidth={2.2} /></Plain>
        <Plain label="Strikethrough" w={37}><Strikethrough size={20} strokeWidth={2.2} /></Plain>
        <Plain label="Line spacing" w={37}><SpacingIcon /></Plain>
        <Plain label="Bullets" w={37}><List size={22} strokeWidth={2.6} /></Plain>
        <Plain label="Highlight" w={37}><Highlight /></Plain>
        <Plain label="Font color" w={37}><FontColor /></Plain>
      </Row>
    </FloatFont>
    <FloatButtons $w={66}>
      <button><BrushIcon s={24} /><span>Format<br />Painter</span></button>
    </FloatButtons>
    <FloatButtons $w={163}>
      <button>
        <Svg s={24} w={2}><path d="M3 18V3h15M21 14v7h-6" /><path d="M21 7 12 15l2 2z" fill="currentColor" /><circle cx="9" cy="19" r="2.4" fill="currentColor" /></Svg>
        Styles
      </button>
      <button><BucketOutline />Fill</button>
      <button><PenIcon s={22} />Line</button>
    </FloatButtons>
    <FloatButtons $w={64} $last>
      <button>
        <Svg s={28} w={2}><circle cx="12" cy="12" r="10" /><path d="M12 7v.5M12 12v.5M12 17v.5" strokeWidth="2.6" /></Svg>
        More
      </button>
    </FloatButtons>
    <FloatCorner>
      <Svg s={13} w={2} color="#8a8a90"><path d="m14 2 8 8-4 1-4 5 1 4L4 9l4 1 5-4zM9 15l-7 7" /></Svg>
      <Svg s={12} w={2} color="#8a8a90"><path d="M8 1v7H1M22 14h-8v8" /></Svg>
    </FloatCorner>
  </FloatBar>
);

const docs = ["Enterprise Risk ...", "Enterprise Risk ...", "4 Risk Manage...", "Five Stage Cycl..."];

const Editor = () => (
  <Workspace>
    <DocTabs>
      {docs.map((name, i) => (
        <DocTab key={i} $active={i === 3}>
          <DocIcon active={i === 3} />
          <span>{name}</span>
          <i />
        </DocTab>
      ))}
      <NewTab aria-label="New tab">
        <Svg s={18} w={2.6}><path d="M12 1v22M1 12h22" /></Svg>
      </NewTab>
    </DocTabs>
    <Board>
      <div />
      <TopRuler />
      <div />
      <SideRuler />
      <Canvas>
        <Drawing />
        <PageTitle>Five Stage Cycle of Risk Management Process</PageTitle>
        <Note $x={803} $y={181}><b>Identifying the Risk</b>Add Text Here</Note>
        <Note $x={965} $y={329}><b>Analysing the Risk</b>Add Text Here</Note>
        <Note $x={891} $y={616}><b>Evaluating the Risk</b>Add Text Here</Note>
        <Note $x={189} $y={631} $right><b>Treating the Risk</b>Add Text Here</Note>
        <Note $x={132} $y={326} $right><b>Monitoring and</b><b>Reviewing the Risk</b>Add Text Here</Note>
        <HubText>Risk Management Process</HubText>
        <StageNumber $x={581} $y={316}>1</StageNumber>
        <StageNumber $x={748} $y={369}>2</StageNumber>
        <StageNumber $x={748} $y={545}>3</StageNumber>
        <StageNumber $x={567} $y={600}>4</StageNumber>
        <StageNumber $x={475} $y={447}>5</StageNumber>
        <Selection />
        <FloatingToolbar />
        <AiBubble aria-label="Edraw AI"><AiLogo /></AiBubble>
      </Canvas>
      <VScroll />
    </Board>
    <HScroll />
    <ColorBar>
      <button className="fill" aria-label="Fill color"><BucketIcon s={18} /><Caret /></button>
      {palette.map((c) => <Swatch key={c} $c={`#${c}`} aria-label={`#${c}`} />)}
    </ColorBar>
  </Workspace>
);

const Footer = () => (
  <StatusBar>
    <Svg s={28} w={2}><path d="M2 5v14M22 5v14M6 5h12v14H6z" strokeLinejoin="miter" /></Svg>
    <PageSelect>
      <select aria-label="Page" defaultValue="Page-1"><option>Page-1</option></select>
      <Caret />
    </PageSelect>
    <Plain label="Add page" w={60}><Svg s={15} w={3.4}><path d="M12 2v20M2 12h20" /></Svg></Plain>
    <PageTab>Page-1</PageTab>
    <StatusRight>
      <span className="count">Number of shapes: 31</span>
      <span className="shape-id">Shape ID: 140</span>
      <StatusButton $after={25} aria-label="Layers">
        <Svg s={23} w={2.2}><path d="M12 2 2 9l10 7 10-7zM2 15l10 7 10-7" /></Svg>
      </StatusButton>
      <StatusButton $after={20}>
        <Svg s={21} w={2.2}><path d="M2 7V2h5M17 2h5v5M22 17v5h-5M7 22H2v-5" /><path d="M8 7h5l3 3v7H8z" fill="currentColor" strokeWidth="1" /></Svg>
        Focus
      </StatusButton>
      <StatusButton $after={18} aria-label="Play">
        <Svg s={22} w={2}><circle cx="12" cy="12" r="10" /><path d="m10 8 6 4-6 4z" fill="currentColor" /></Svg>
      </StatusButton>
      <StatusButton $after={12}>65%<Caret /></StatusButton>
      <StatusButton aria-label="Zoom out"><Svg s={14} w={4}><path d="M2 12h20" /></Svg></StatusButton>
      <Zoom type="range" min="0" max="100" defaultValue="16" aria-label="Zoom" />
      <StatusButton $after={19} aria-label="Zoom in"><Svg s={14} w={3.5}><path d="M12 2v20M2 12h20" /></Svg></StatusButton>
      <StatusButton $after={19} aria-label="Full screen"><Svg s={21} w={2.4}><path d="M2 8V2h6M16 2h6v6M22 16v6h-6M8 22H2v-6" /></Svg></StatusButton>
      <StatusButton aria-label="Fit to window"><Svg s={21} w={2.4}><path d="M2 3h20v18H2zM6 12h12M9 9l-3 3 3 3M15 9l3 3-3 3" /></Svg></StatusButton>
    </StatusRight>
  </StatusBar>
);

const App = () => (
  <>
    <GlobalStyle />
    <Window>
      <TopBar />
      <Menu />
      <RibbonBar />
      <Main>
        <SymbolPanel />
        <Editor />
      </Main>
      <Footer />
    </Window>
  </>
);

export default App;
